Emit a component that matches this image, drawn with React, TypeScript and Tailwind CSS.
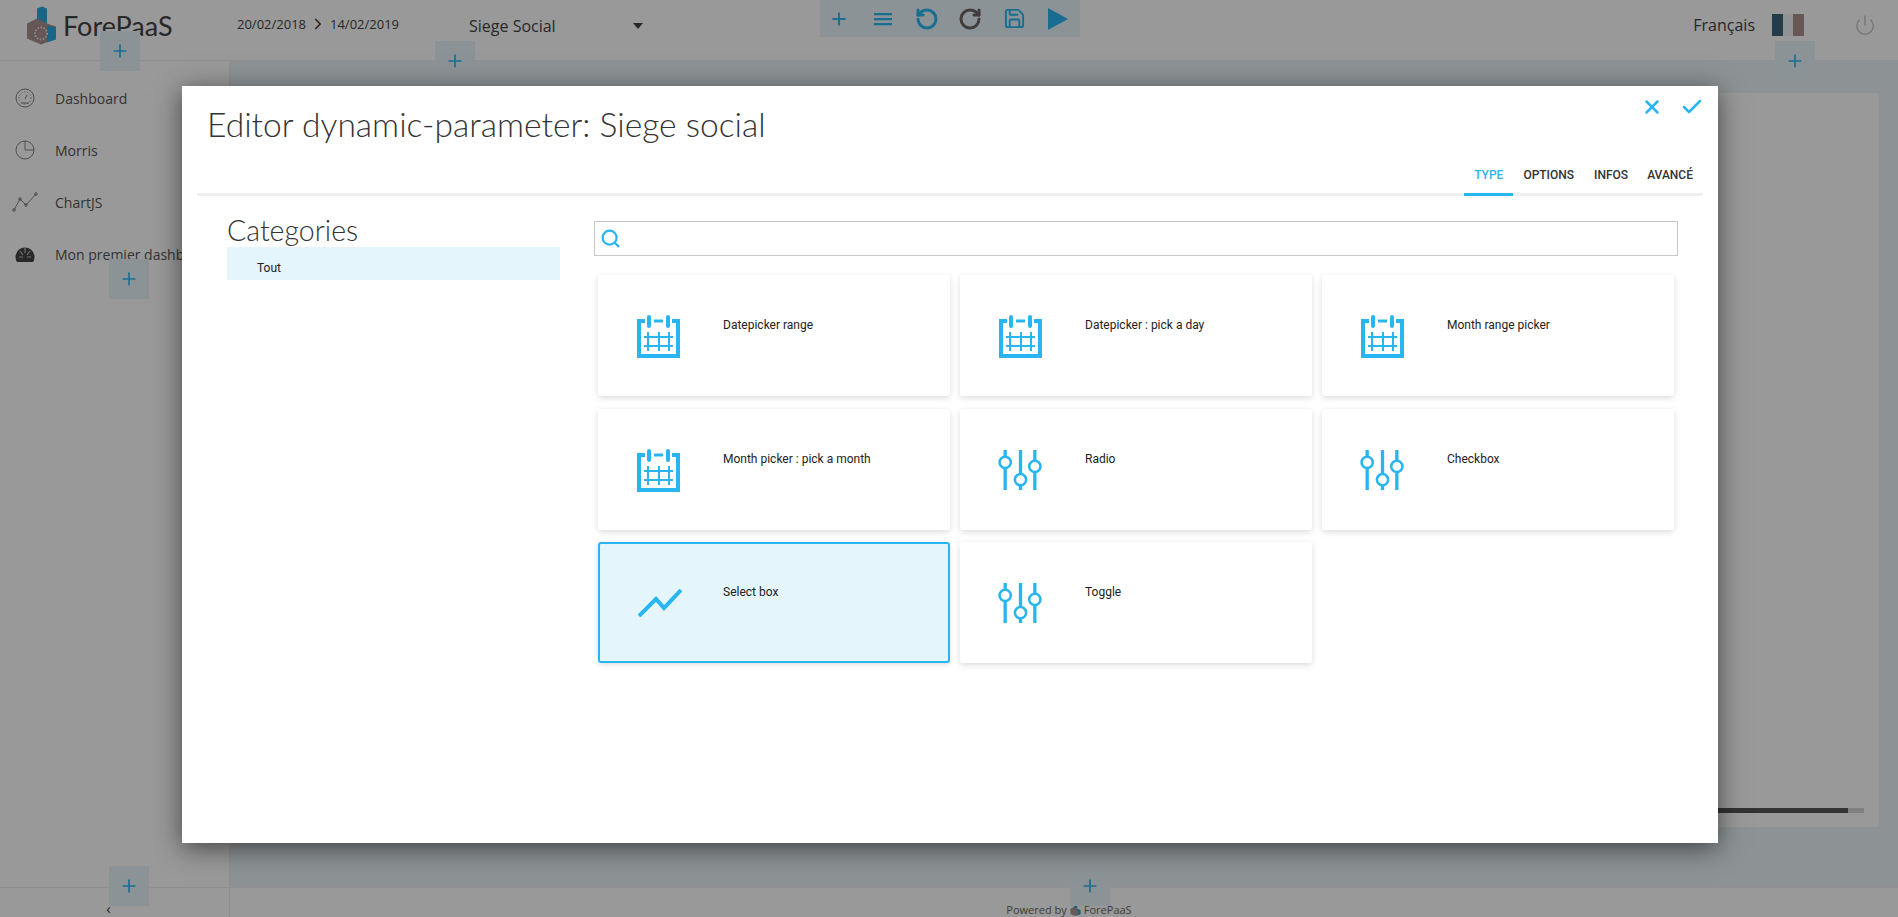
import { Check, ChevronRight, Plus, Power, RotateCcw, RotateCw, Save, Search, X } from "lucide-react";

const sans = "font-['Open_Sans',sans-serif]";

function Logo({ className }: { className: string }) {
  return (
    <svg viewBox="0 0 29 38" className={className}>
      <path d="M10 2 L15 0 L20 2 V17 H10 Z" fill="#29a9e0" />
      <path d="M0 17 L10 12 L20 17 L29 20 V32 L14 38 L0 32 Z" fill="#a8918c" />
      <path d="M20 19 L29 21 V33 L20 36 Z" fill="#29a9e0" />
      <circle cx="14" cy="27" r="6" fill="none" stroke="#e6dedc" strokeWidth="2" strokeDasharray="1.5 1.5" />
    </svg>
  );
}

function Calendar() {
  return (
    <svg viewBox="0 0 43 43" className="mt-[2px] h-[43px] w-[43px]" fill="none" stroke="#29b6f0">
      <path d="M8 6 H2 V41 H41 V6 H35" strokeWidth="4" />
      <path d="M12 2 V11 M31 2 V11" strokeWidth="4" strokeLinecap="round" />
      <path d="M17 6 H26" strokeWidth="3" />
      <path d="M7 22 H36 M7 31 H36 M11 17 V36 M22 17 V36 M32 17 V36" strokeWidth="2" />
    </svg>
  );
}

function Sliders() {
  return (
    <svg viewBox="0 0 43 40" className="mt-[2px] h-[41px] w-[44px]" fill="none" stroke="#29b6f0">
      <path d="M7 0 V6 M7 18 V39 M22 0 V23 M22 35 V39 M36 0 V10 M36 22 V39" strokeWidth="3.25" />
      <circle cx="7" cy="12" r="5.5" strokeWidth="2.5" />
      <circle cx="22" cy="29" r="5.5" strokeWidth="2.5" />
      <circle cx="36" cy="16" r="5.5" strokeWidth="2.5" />
    </svg>
  );
}

function Trend() {
  return (
    <svg viewBox="0 0 44 28" className="h-[28px] w-[44px]" fill="none" stroke="#29b6f0" strokeWidth="4">
      <path d="M1 27 L18 10 L26 19 L43 1" />
    </svg>
  );
}

const cards = [
  { label: "Datepicker range", icon: <Calendar /> },
  { label: "Datepicker : pick a day", icon: <Calendar /> },
  { label: "Month range picker", icon: <Calendar /> },
  { label: "Month picker : pick a month", icon: <Calendar /> },
  { label: "Radio", icon: <Sliders /> },
  { label: "Checkbox", icon: <Sliders /> },
  { label: "Select box", icon: <Trend />, selected: true },
  { label: "Toggle", icon: <Sliders /> },
];

function AddBox({ className }: { className: string }) {
  return (
    <div className={`absolute flex h-10 w-10 items-center justify-center bg-[#e9f6fc] ${className}`}>
      <Plus size={20} strokeWidth={2} className="text-[#29b6f0]" />
    </div>
  );
}

function SideItem({ icon, label }: { icon: React.ReactNode; label: string }) {
  return (
    <div className="flex h-[52px] items-center whitespace-nowrap">
      <div className="flex w-[55px] justify-center pr-[5px]">{icon}</div>
      <span className="text-[14px] text-[#555]">{label}</span>
    </div>
  );
}

export default function App() {
  return (
    <div className={`relative flex h-[917px] w-full flex-col overflow-hidden bg-white ${sans}`}>
      {/* Page behind the dialog */}
      <header className="flex h-[61px] shrink-0 items-start border-b border-[#eeeeee] bg-white">
        <div className="flex w-[237px] shrink-0 items-start pl-[27px] pt-[6px]">
          <Logo className="h-[39px] w-[29px]" />
          <span className="ml-[7px] mt-[3px] font-['Lato',sans-serif] text-[27px] font-normal leading-[34px] text-[#444]">ForePaaS</span>
        </div>
        <div className="flex w-[232px] shrink-0 items-center pt-[15px] text-[13px] leading-[18px] text-[#444]">
          <span>20/02/2018</span>
          <ChevronRight size={18} strokeWidth={2.25} className="mx-[3px] text-[#444]" />
          <span>14/02/2019</span>
        </div>
        <div className="flex w-[174px] shrink-0 items-center justify-between pt-[14px] text-[16px] leading-[24px] text-[#444]">
          <span>Siege Social</span>
          <span className="h-0 w-0 border-x-[5px] border-t-[6px] border-x-transparent border-t-[#444]" />
        </div>
        <div className="ml-[177px] flex h-[37px] w-[260px] shrink-0 items-center bg-[#e9f6fc] text-[#29b6f0]">
          <div className="-ml-[3px] flex w-[44px] justify-center">
            <Plus size={20} strokeWidth={2.25} />
          </div>
          <div className="flex w-[45px] justify-center">
            <svg viewBox="0 0 18 14" className="h-[14px] w-[18px]" fill="none" stroke="currentColor" strokeWidth="2.25">
              <path d="M0 2 H18 M0 7 H18 M0 12 H18" />
            </svg>
          </div>
          <div className="flex w-[43px] justify-center">
            <RotateCcw size={24} strokeWidth={3} />
          </div>
          <div className="flex w-[45px] justify-center">
            <RotateCw size={24} strokeWidth={3} className="text-[#6f6666]" />
          </div>
          <div className="flex w-[44px] justify-center">
            <Save size={23} strokeWidth={2} />
          </div>
          <div className="flex w-[44px] justify-center">
            <svg viewBox="0 0 20 22" className="h-[22px] w-[20px]" fill="currentColor">
              <path d="M0 0 L20 11 L0 22 Z" />
            </svg>
          </div>
        </div>
        <div className="ml-auto flex items-center pr-[22px] pt-[13px] text-[16px] leading-[24px] text-[#444]">
          <span>Français</span>
          <div className="ml-[17px] flex h-[22px] w-[32px]">
            <div className="flex-1 bg-[#3b6478]" />
            <div className="flex-1 bg-[#f0f4f6]" />
            <div className="flex-1 bg-[#b0928e]" />
          </div>
          <Power size={22} strokeWidth={1.5} className="ml-[50px] text-[#c4c4c4]" />
        </div>
      </header>

      <div className="flex min-h-0 flex-1">
        <aside className="w-[230px] shrink-0 border-r border-[#eeeeee] bg-white pt-[11px]">
          <SideItem
            label="Dashboard"
            icon={
              <svg viewBox="0 0 20 20" className="h-[20px] w-[20px]" fill="none" stroke="#777" strokeWidth="0.9">
                <circle cx="10" cy="10" r="9" />
                <path d="M6 15 H14 M10 11 L12 7" />
                <circle cx="10" cy="10" r="6" strokeDasharray="1 2" />
              </svg>
            }
          />
          <SideItem
            label="Morris"
            icon={
              <svg viewBox="0 0 20 20" className="h-[20px] w-[20px]" fill="none" stroke="#777" strokeWidth="0.9">
                <circle cx="10" cy="10" r="9" />
                <path d="M10 1 V10 H19" />
              </svg>
            }
          />
          <SideItem
            label="ChartJS"
            icon={
              <svg viewBox="0 0 26 20" className="h-[20px] w-[26px]" fill="none" stroke="#777" strokeWidth="0.9">
                <path d="M2 18 L8 7 L14 13 L24 2" />
                <circle cx="2" cy="18" r="1.3" />
                <circle cx="8" cy="7" r="1.3" />
                <circle cx="14" cy="13" r="1.3" />
                <circle cx="24" cy="2" r="1.3" />
              </svg>
            }
          />
          <SideItem
            label="Mon premier dashboard"
            icon={
              <svg viewBox="0 0 20 18" className="h-[18px] w-[20px]">
                <path d="M2 17 A9.5 9.5 0 1 1 18 17 Z" fill="#444" />
                <path d="M10 3 V8 M5 6 L8 10 M15 6 L12 10 M4 12 H8 M12 12 H16" stroke="#bbb" strokeWidth="1.2" />
              </svg>
            }
          />
        </aside>
        <main className="min-w-0 flex-1 bg-[#ebf3f8] pb-[60px] pl-[10px] pr-[19px] pt-[32px]">
          <div className="flex h-full flex-col justify-end rounded-[3px] bg-white pb-[14px] pr-[15px]">
            <div className="flex h-[5px]">
              <div className="flex-1 bg-[#555]" />
              <div className="w-[16px] bg-[#d8d8d8]" />
            </div>
          </div>
        </main>
      </div>

      <footer className="flex h-[30px] shrink-0 border-t border-[#eeeeee] bg-white">
        <div className="flex w-[230px] shrink-0 justify-center border-r border-[#eeeeee] pr-[12px] pt-[12px] text-[15px] leading-[16px] text-[#444]">‹</div>
        <div className="flex flex-1 items-start justify-center gap-[3px] pl-[10px] pt-[14px] text-[11px] leading-[15px] text-[#666]">
          <span>Powered by</span>
          <Logo className="mt-[1px] h-[13px] w-[11px]" />
          <span>ForePaaS</span>
        </div>
      </footer>

      <AddBox className="left-[100px] top-[31px]" />
      <AddBox className="left-[435px] top-[41px]" />
      <AddBox className="left-[1775px] top-[41px]" />
      <AddBox className="left-[109px] top-[259px]" />
      <AddBox className="left-[109px] top-[866px]" />
      <AddBox className="left-[1070px] top-[866px]" />

      {/* Dialog */}
      <div className="absolute inset-0 flex justify-center bg-black/40 pl-[2px] pt-[86px]">
        <div className="flex h-[757px] w-[1536px] flex-col bg-white px-[15px] shadow-[0_5px_25px_rgba(0,0,0,0.55)]">
          <div className="relative flex h-[110px] shrink-0 flex-col border-b-[3px] border-[#efefef]">
            <h1 className="pl-[10px] pt-[17px] font-['Lato',sans-serif] text-[33.6px] font-light leading-[42px] text-[#333]">
              Editor dynamic-parameter: Siege social
            </h1>
            <div className="absolute right-[-1px] top-[9px] flex items-center gap-[17px] text-[#29b6f0]">
              <X size={22} strokeWidth={2.75} />
              <Check size={24} strokeWidth={2.5} />
            </div>
            <nav className="mt-auto flex justify-end font-['Roboto',sans-serif] text-[12px] font-medium leading-[14px] text-[#333]">
              <span className="-mb-[3px] border-b-[3px] border-[#29b6f0] px-[10px] pb-[11px] text-[#29b6f0]">TYPE</span>
              <span className="pl-[10px] pr-[10px]">OPTIONS</span>
              <span className="px-[10px]">INFOS</span>
              <span className="-ml-[1px] px-[10px]">AVANCÉ</span>
            </nav>
          </div>
          <div className="flex min-h-0 flex-1">
            <div className="ml-[30px] w-[333px] shrink-0 pt-[18px]">
              <h2 className="font-['Lato',sans-serif] text-[28.5px] font-light leading-[33px] text-[#333]">Categories</h2>
              <div className="flex h-[33px] items-center bg-[#e4f5fc] pl-[30px] pt-[9px] font-['Roboto',sans-serif] text-[12px] text-[#222]">Tout</div>
            </div>
            <div className="ml-[34px] min-w-0 flex-1 pt-[25px]">
              <div className="flex h-[35px] w-[1084px] items-center border border-[#c8c8c8] pl-[5px]">
                <Search size={21} strokeWidth={2.5} className="text-[#29b6f0]" />
              </div>
              <div className="ml-[4px] mt-[19px] grid grid-cols-[repeat(3,352px)] grid-rows-[repeat(3,121px)] gap-x-[10px] gap-y-[12.5px]">
                {cards.map((card) => (
                  <div
                    key={card.label}
                    className={
                      card.selected
                        ? "flex rounded-[3px] border-2 border-[#29b6f0] bg-[#e4f5fc] shadow-[0_2px_5px_rgba(0,0,0,0.12)]"
                        : "flex rounded-[3px] bg-white shadow-[0_2px_6px_rgba(0,0,0,0.14)]"
                    }
                  >
                    <div className={card.selected ? "flex w-[123px] shrink-0 items-center justify-center pr-[4px]" : "flex w-[125px] shrink-0 items-center justify-center pr-[5px]"}>
                      {card.icon}
                    </div>
                    <span className={card.selected ? "pt-[40px] font-['Roboto',sans-serif] text-[12px] leading-[16px] text-[#222]" : "pt-[42px] font-['Roboto',sans-serif] text-[12px] leading-[16px] text-[#222]"}>
                      {card.label}
                    </span>
                  </div>
                ))}
              </div>
            </div>
          </div>
        </div>
      </div>
    </div>
  );
}
